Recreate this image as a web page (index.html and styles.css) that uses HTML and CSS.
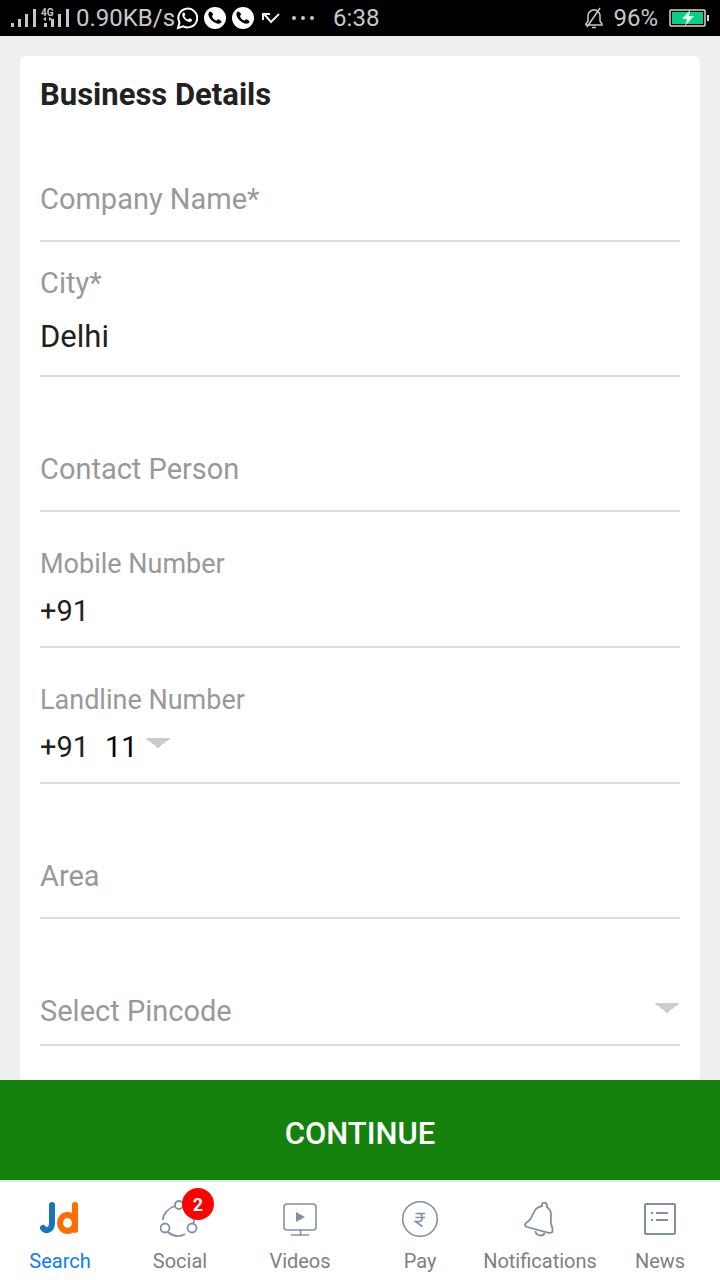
FILE: index.html
```html
<!DOCTYPE html>
<html lang="en">
<head>
<meta charset="utf-8">
<meta name="viewport" content="width=device-width, initial-scale=1">
<title>Business Details</title>
<link rel="stylesheet" href="styles.css">
</head>
<body>
<header class="status">
  <svg class="signal" width="60" height="24" viewBox="0 0 60 24" fill="#c8c8c8" aria-hidden="true">
    <path d="M1 17h3v4h-3zM8 13h3v8h-3zM15 8h3v13h-3zM23 3h3v18h-3zM34 17h3v4h-3zM41 13h3v8h-3zM48 8h3v13h-3zM56 3h3v18h-3z"/>
    <path d="M33 13l3-2v4zM38 10v5M39 11l3 2-3 2z"/>
    <text class="signal-tag" x="31" y="10">4G</text>
  </svg>
  <span class="speed">0.90KB/s</span>
  <svg class="chat" width="22" height="24" viewBox="0 0 22 24" aria-hidden="true">
    <path d="M2 22l1.500-5.500a9.400 9.400 0 1 1 3.800 3.800z" fill="none" stroke="#fff" stroke-width="2"/>
    <path d="M7.500 6.500c-2 1.200-1.600 4 1 6.700s5.700 3.800 7.300 1.700c.7-1 .2-1.700-2-2.600-.8-.3-1.200 1.300-1.900 1.200-1.600-.5-3-2-3.500-3.300-.1-.6 1.200-1 .9-1.700-.5-1.500-.9-2.300-1.800-2z" fill="#fff"/>
  </svg>
  <svg class="call" width="22" height="22" viewBox="0 0 22 22" aria-hidden="true">
    <circle cx="11" cy="11" r="11" fill="#fff"/>
    <path d="M6 4.500c-3 1.700-1.400 6 1.800 9s8 4.700 9.700 1.600c.4-.8-2.800-3-3.600-2.700-.8.300-.8 1.300-1.500 1.200-2-.6-3.900-2.600-4.400-4.400-.1-.7 1-.8 1.100-1.600.1-.8-1.900-3.500-3.100-3.100z" fill="#000"/>
  </svg>
  <svg class="call" width="22" height="22" viewBox="0 0 22 22" aria-hidden="true">
    <circle cx="11" cy="11" r="11" fill="#fff"/>
    <path d="M6 4.500c-3 1.700-1.400 6 1.800 9s8 4.700 9.700 1.600c.4-.8-2.800-3-3.600-2.700-.8.300-.8 1.300-1.500 1.200-2-.6-3.900-2.600-4.400-4.400-.1-.7 1-.8 1.100-1.600.1-.8-1.900-3.500-3.100-3.100z" fill="#000"/>
  </svg>
  <svg class="missed" width="18" height="12" viewBox="0 0 18 12" fill="none" stroke="#eee" stroke-width="2" aria-hidden="true"><path d="M1 8V2h7M2 2l7 8 8-8"/></svg>
  <svg class="dots" width="24" height="6" viewBox="0 0 24 6" fill="#c8c8c8" aria-hidden="true"><circle cx="3" cy="3" r="2"/><circle cx="12" cy="3" r="2"/><circle cx="21" cy="3" r="2"/></svg>
  <time class="clock">6:38</time>
  <svg class="muted" width="20" height="22" viewBox="0 0 20 22" fill="none" stroke="#c8c8c8" stroke-width="1.500" aria-hidden="true"><path d="M2 18h16v-1l-2-3V9c0-3-2-5-4.500-6h-3C6 4 4 6 4 9v5l-2 3zM8 20.500h4M16 1L3 20"/></svg>
  <span class="charge">96%</span>
  <svg class="battery" width="41" height="18" viewBox="0 0 41 18" aria-hidden="true">
    <rect x="1" y="1" width="35" height="16" rx="1" fill="none" stroke="#d8d8d8" stroke-width="1.500"/>
    <rect x="3" y="3" width="31" height="12" fill="#06d085"/>
    <path d="M38 6h2v6h-2z" fill="#d8d8d8"/>
    <path d="M21 1l-8 9h5l-2 7 9-10h-5z" fill="#e8fff4"/>
  </svg>
</header>
<main class="page">
  <form class="card" id="business">
    <h1 class="title">Business Details</h1>
    <div class="field field-short"><input class="control control-empty" type="text" placeholder="Company Name*" aria-label="Company Name"></div>
    <div class="field">
      <label class="label" for="city">City*</label>
      <input class="control control-city" id="city" type="text" value="Delhi">
    </div>
    <div class="field"><input class="control control-empty" type="text" placeholder="Contact Person" aria-label="Contact Person"></div>
    <div class="field field-phone">
      <label class="label label-small" for="mobile">Mobile Number</label>
      <div class="phone"><span class="prefix">+91</span><input class="control" id="mobile" type="tel"></div>
    </div>
    <div class="field field-phone">
      <label class="label label-small" for="landline">Landline Number</label>
      <div class="phone">
        <span class="prefix">+91</span>
        <select class="control area-code arrow" aria-label="Area code"><option>11</option></select>
        <input class="control" id="landline" type="tel">
      </div>
    </div>
    <div class="field"><input class="control control-empty" type="text" placeholder="Area" aria-label="Area"></div>
    <div class="field field-short"><select class="control pincode arrow" aria-label="Pincode"><option>Select Pincode</option></select></div>
  </form>
</main>
<button class="continue" type="submit" form="business">CONTINUE</button>
<nav class="tabs">
  <a class="tab tab-active" href="#">
    <svg width="40" height="40" viewBox="0 0 40 40" fill="none" stroke-width="6" stroke-linecap="round" aria-hidden="true">
      <path d="M12 7v18c0 7-6 9-9 5" stroke="#1b75bb"/>
      <g stroke="#ff6c00"><path d="M35 7v25"/><ellipse cx="27.500" cy="25" rx="7.500" ry="8"/></g>
    </svg>
    Search
  </a>
  <a class="tab" href="#">
    <span class="icon-wrap">
      <svg width="40" height="40" viewBox="0 0 40 40" fill="none" stroke="#8191a5" stroke-width="1.800" aria-hidden="true">
        <circle cx="19" cy="7" r="4"/><circle cx="5" cy="30" r="4.500"/><circle cx="32" cy="30" r="4.500"/>
        <path d="M15 8C8 10 3 16 3 22M8 34c5 5 12 5 17 2M23 8c7 3 11 9 11 17"/>
      </svg>
      <span class="badge">2</span>
    </span>
    Social
  </a>
  <a class="tab" href="#">
    <svg width="40" height="40" viewBox="0 0 40 40" fill="none" stroke="#8191a5" stroke-width="1.600" aria-hidden="true">
      <rect x="4" y="6" width="32" height="26" rx="3"/><path d="M20.500 32v5M11 37h18"/><path d="M16 14v10l9-5z" fill="#8191a5" stroke="none"/>
    </svg>
    Videos
  </a>
  <a class="tab" href="#">
    <svg width="40" height="40" viewBox="0 0 40 40" fill="none" stroke="#8191a5" stroke-width="1.600" aria-hidden="true">
      <circle cx="20" cy="21" r="17.300"/><path d="M15.500 15.500h9.500M15.500 19.500h9.500M15.500 15.500h3c5 0 5 8 0 8h-3l7 5"/>
    </svg>
    Pay
  </a>
  <a class="tab" href="#">
    <svg width="40" height="40" viewBox="0 0 40 40" fill="none" stroke="#8191a5" stroke-width="1.800" aria-hidden="true">
      <path d="M22 6c1-2 5-2 5 2l-.2 1c5 3 4.500 8 4 13s2 6 1.800 11c-.2 2-2 2-4 1.800L7 29c-2-1-3-2-1-4 4-3 5-4 7-9s4-7 9-8z"/><path d="M15.500 33c0 5 8 6 9 2"/>
    </svg>
    Notifications
  </a>
  <a class="tab" href="#">
    <svg width="40" height="40" viewBox="0 0 40 40" fill="none" stroke="#8191a5" stroke-width="2" aria-hidden="true">
      <rect x="5" y="6" width="30" height="30" rx="1"/><path d="M11 15h2M16 15h12M11 22h2M16 22h12"/>
    </svg>
    News
  </a>
</nav>
</body>
</html>
```
FILE: styles.css
```css
* { box-sizing: border-box; }
body {
  margin: 0;
  height: 100vh;
  display: flex;
  flex-direction: column;
  background: #efefef;
  color: #212121;
  font-family: Roboto, sans-serif;
}
.status {
  flex: none;
  height: 36px;
  padding: 0 10px;
  display: flex;
  align-items: center;
  background: #000;
  color: #c8c8c8;
  font-size: 24px;
}
.status svg { flex: none; }
.signal-tag { font: bold 10px Roboto, sans-serif; }
.speed { margin-left: 6px; }
.chat { margin-left: 1px; }
.call { margin-left: 6px; }
.missed { margin-left: 8px; }
.dots { margin-left: 11px; }
.clock { margin-left: 18px; }
.muted { margin-left: auto; }
.charge { margin: 0 11px 0 9px; }
.page {
  flex: 1;
  min-height: 0;
  overflow: hidden;
  padding: 20px 20px 0;
}
.card {
  min-height: 100%;
  padding: 19px 20px 60px;
  background: #fff;
  border-radius: 6px;
}
.title {
  margin: 0;
  font-size: 31px;
  line-height: 40px;
  font-weight: 700;
}
.field {
  height: 135px;
  display: flex;
  flex-direction: column;
  justify-content: flex-end;
  border-bottom: 2px solid #dcdcdc;
}
.field-phone { height: 136px; }
.field-short { height: 127px; }
.label {
  font-size: 29px;
  line-height: 36px;
  color: #999;
}
.label-small { font-size: 27px; }
.control {
  width: 100%;
  min-width: 0;
  margin: 0;
  padding: 0;
  border: 0;
  outline: 0;
  background: transparent;
  color: #212121;
  font: 29px Roboto, sans-serif;
}
.control::placeholder { color: #999; opacity: 1; }
.control-empty { height: 82px; }
.control-city {
  height: 74px;
  padding-bottom: 4px;
  font-size: 31px;
}
.phone {
  height: 64px;
  padding-bottom: 6px;
  display: flex;
  align-items: center;
}
.prefix { font-size: 29px; }
.arrow {
  appearance: none;
  background: conic-gradient(from -52deg at 50% 100%, #ccc 104deg, transparent 0) no-repeat right center / 26px 10px;
}
.area-code {
  flex: none;
  width: 66px;
  height: 48px;
  margin-left: 16px;
  color: #000;
  background-position: right 15px;
}
.pincode {
  height: 66px;
  color: #999;
  background-position: right 25px;
}
.continue {
  flex: none;
  height: 100px;
  padding: 6px 0 0;
  border: 0;
  background: #14820c;
  color: #fff;
  font: 500 31px Roboto, sans-serif;
}
.tabs {
  flex: none;
  height: 100px;
  display: grid;
  grid-template-columns: repeat(6, 1fr);
  border-top: 2px solid #e3e7ea;
  background: #fff;
}
.tab {
  padding-top: 16px;
  display: flex;
  flex-direction: column;
  align-items: center;
  gap: 10px;
  color: #808080;
  font-size: 20px;
  line-height: 26px;
  text-decoration: none;
}
.tab-active { color: #0a7cff; }
.icon-wrap { position: relative; height: 40px; }
.badge {
  position: absolute;
  top: -10px;
  right: -14px;
  width: 32px;
  height: 32px;
  border-radius: 50%;
  background: #f00;
  color: #fff;
  font-size: 18px;
  font-weight: 700;
  line-height: 33px;
  text-align: center;
}
```
